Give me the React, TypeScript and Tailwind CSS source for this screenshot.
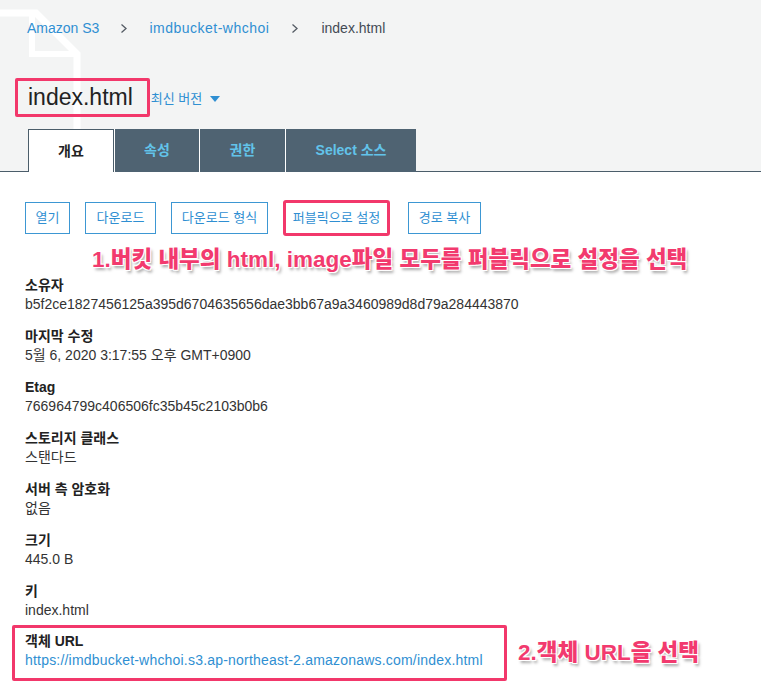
const FONT = "font-['Liberation_Sans','Noto_Sans_CJK_KR',sans-serif]";

const FIELDS = [
  { label: "소유자", value: "b5f2ce1827456125a395d6704635656dae3bb67a9a3460989d8d79a284443870" },
  { label: "마지막 수정", value: "5월 6, 2020 3:17:55 오후 GMT+0900" },
  { label: "Etag", value: "766964799c406506fc35b45c2103b0b6" },
  { label: "스토리지 클래스", value: "스탠다드" },
  { label: "서버 측 암호화", value: "없음" },
  { label: "크기", value: "445.0 B" },
  { label: "키", value: "index.html" },
];

const BUTTONS = [
  { label: "열기", w: "w-[45px]" },
  { label: "다운로드", w: "w-[71px]" },
  { label: "다운로드 형식", w: "w-[97px]" },
  { label: "퍼블릭으로 설정", w: "w-[103px]", marked: true },
  { label: "경로 복사", w: "w-[73px]" },
];

const NOTE =
  "text-[#f23a6e] font-black text-[22.5px] leading-[30px] whitespace-nowrap [text-shadow:1px_1px_0_#fff,-1px_-1px_0_#fff,1px_-1px_0_#fff,-1px_1px_0_#fff,2px_3px_3px_rgba(0,0,0,0.35)]";

function Chevron({ gap }: { gap: string }) {
  return (
    <svg width="8" height="11" viewBox="0 0 8 11" className={gap}>
      <path d="M1.5 1.5 L6 5.5 L1.5 9.5" fill="none" stroke="#545b64" strokeWidth="1.3" />
    </svg>
  );
}

export default function App() {
  return (
    <div className={`w-[761px] h-[696px] overflow-hidden bg-white text-[#222] ${FONT}`}>
      <header className="relative bg-[#f3f4f4] border-b border-[#4b5d6a]">
        {/* faint file glyph behind the breadcrumb */}
        <svg className="absolute left-0 top-0" width="95" height="130" viewBox="0 0 95 130">
          <path d="M-40 13 H36 L77 54 V135" fill="none" stroke="#fff" strokeWidth="7" />
          <path d="M32 13 V54 H77" fill="none" stroke="#fff" strokeWidth="6" />
        </svg>

        <nav className="relative flex items-center pt-[18px] pl-[27px] h-[38px] text-[14px] leading-[20px]">
          <span className="text-[#2f8fd2]">Amazon S3</span>
          <Chevron gap="mx-[21px]" />
          <span className="text-[#2f8fd2] tracking-[0.5px]">imdbucket-whchoi</span>
          <Chevron gap="mx-[22px]" />
          <span className="text-[#444b54]">index.html</span>
        </nav>

        <div className="relative flex items-center mt-[40px] pl-[15px]">
          <h1 className="h-[39px] border-[3px] border-[#f2386b] rounded-[2px] pl-[10px] pr-[14px] text-[23px] leading-[33px] font-normal text-[#222]">
            index.html
          </h1>
          <span className="ml-[1px] mt-[2px] text-[13px] text-[#2f8fd2]">최신 버전</span>
          <svg width="10" height="6" viewBox="0 0 10 6" className="ml-[8px] mt-[3px]">
            <path d="M0 0 H10 L5 6 Z" fill="#2f8fd2" />
          </svg>
        </div>

        <div className="relative flex mt-[12px] pl-[28px] h-[43px] -mb-px text-[14px] font-bold">
          <div className="w-[86px] flex items-center justify-center bg-white border border-b-0 border-[#4b5d6a] text-[#222]">
            개요
          </div>
          <div className="w-[85px] flex items-center justify-center bg-[#4f6372] border-l border-white text-[#62c3ea]">
            속성
          </div>
          <div className="w-[86px] flex items-center justify-center bg-[#4f6372] border-l border-white text-[#62c3ea]">
            권한
          </div>
          <div className="w-[131px] flex items-center justify-center bg-[#4f6372] border-l border-white text-[#62c3ea]">
            Select 소스
          </div>
        </div>
      </header>

      <main className="relative pl-[25px] pt-[30px]">
        <div className="flex gap-[15px]">
          {BUTTONS.map((b) => (
            <button
              key={b.label}
              className={`${b.w} h-[32px] flex items-center justify-center border border-[#3d97d3] text-[13px] text-[#2f8fd2] ${
                b.marked ? "outline-[3px] outline-solid outline-[#f2386b] outline-offset-[-1px] rounded-[1px] mx-[2px] mr-[5px]" : ""
              }`}
            >
              {b.label}
            </button>
          ))}
        </div>

        <p className={`absolute left-[92px] top-[73px] ${NOTE}`}>
          1.버킷 내부의 html, image파일 모두를 퍼블릭으로 설정을 선택
        </p>

        <dl className="mt-[42px] text-[14px] leading-[19px]">
          {FIELDS.map((f) => (
            <div key={f.label} className="mb-[13px]">
              <dt className="font-bold">{f.label}</dt>
              <dd className="text-[#333]">{f.value}</dd>
            </div>
          ))}
          <div className="flex items-center -ml-[13px] -mt-[8px]">
            <div className="w-[495px] border-[3px] border-[#f2386b] rounded-[2px] pl-[10px] pt-[4px] pb-[8px]">
              <dt className="font-bold">객체 URL</dt>
              <dd className="text-[#2f8fd2] tracking-[0.2px]">
                https://imdbucket-whchoi.s3.ap-northeast-2.amazonaws.com/index.html
              </dd>
            </div>
            <p className={`ml-[11px] ${NOTE}`}>2.객체 URL을 선택</p>
          </div>
        </dl>
      </main>
    </div>
  );
}
